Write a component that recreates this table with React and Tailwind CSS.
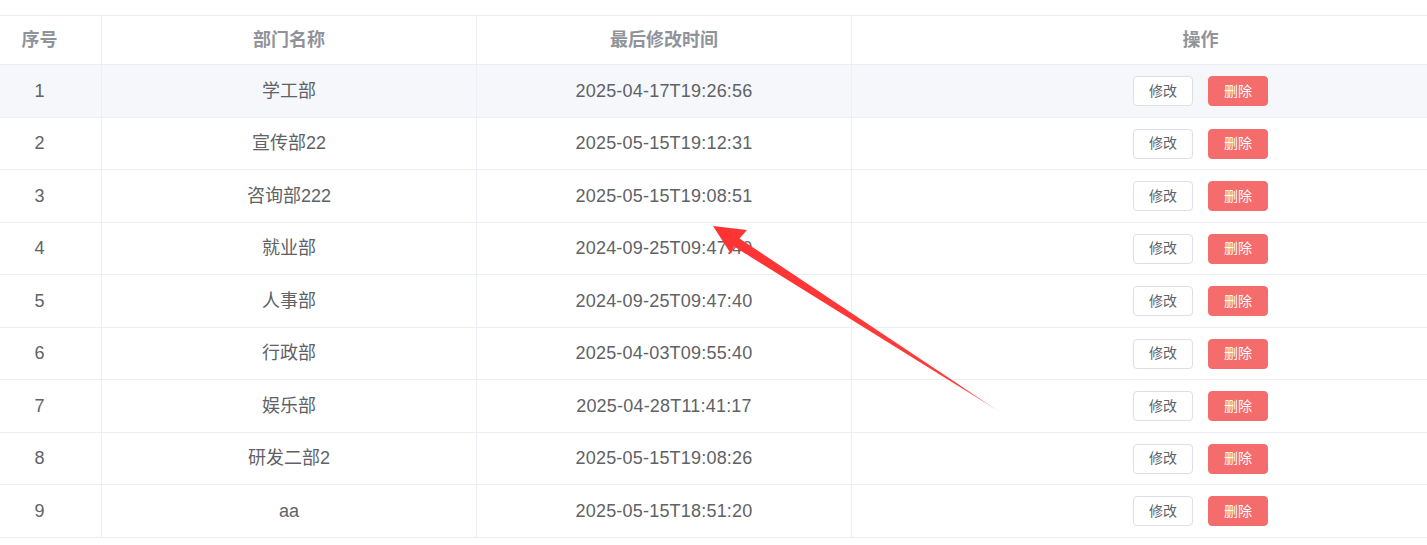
import React from "react";

const rows = [
  ["1", "学工部", "2025-04-17T19:26:56"],
  ["2", "宣传部22", "2025-05-15T19:12:31"],
  ["3", "咨询部222", "2025-05-15T19:08:51"],
  ["4", "就业部", "2024-09-25T09:47:40"],
  ["5", "人事部", "2024-09-25T09:47:40"],
  ["6", "行政部", "2025-04-03T09:55:40"],
  ["7", "娱乐部", "2025-04-28T11:41:17"],
  ["8", "研发二部2", "2025-05-15T19:08:26"],
  ["9", "aa", "2025-05-15T18:51:20"],
];

const font = {
  fontFamily:
    '"Liberation Sans", Arial, "Noto Sans CJK SC", sans-serif',
};

export default function App() {
  return (
    <div className="relative w-[1427px] h-[545px] overflow-hidden bg-white" style={font}>
      <div className="w-[1549px] mt-[15px] border-t border-[#ebeef5]">
        <div className="grid grid-cols-[102px_375px_375px_697px] h-[49px] border-b border-[#ebeef5] text-[18px] font-bold text-[#909399]">
          <div className="flex items-center justify-center pr-[22px] border-r border-[#ebeef5]">序号</div>
          <div className="flex items-center justify-center border-r border-[#ebeef5]">部门名称</div>
          <div className="flex items-center justify-center border-r border-[#ebeef5]">最后修改时间</div>
          <div className="flex items-center justify-center">操作</div>
        </div>
        {rows.map((r, i) => (
          <div
            key={i}
            className={`grid grid-cols-[102px_375px_375px_697px] border-b border-[#ebeef5] text-[18px] text-[#606266] ${
              i % 2 === 0 ? "h-[53px]" : "h-[52px]"
            } ${i === 0 ? "bg-[#f5f7fa]" : "bg-white"}`}
          >
            <div className="flex items-center justify-center pr-[22px] border-r border-[#ebeef5]">{r[0]}</div>
            <div className="flex items-center justify-center border-r border-[#ebeef5]">{r[1]}</div>
            <div className="flex items-center justify-center border-r border-[#ebeef5] tracking-[0.2px]">{r[2]}</div>
            <div className="flex items-center justify-center gap-[15px]">
              <button className="w-[60px] h-[30px] rounded-[4px] border border-[#dcdfe6] bg-white text-[14px] text-[#606266] flex items-center justify-center">
                修改
              </button>
              <button className="w-[60px] h-[30px] rounded-[4px] border border-[#f56c6c] bg-[#f56c6c] text-[14px] text-white flex items-center justify-center">
                删除
              </button>
            </div>
          </div>
        ))}
      </div>
      <svg className="absolute left-0 top-0 pointer-events-none" width="1427" height="545">
        <defs>
          <linearGradient id="ag" x1="713" y1="226" x2="1000" y2="412" gradientUnits="userSpaceOnUse">
            <stop offset="0" stopColor="#ff3333" />
            <stop offset="0.85" stopColor="#ff3b3b" />
            <stop offset="1" stopColor="#ffb0b0" />
          </linearGradient>
        </defs>
        <polygon
          points="713,226 747,230 739.5,238.5 1000,412 734,246.5 731,254"
          fill="url(#ag)"
        />
      </svg>
    </div>
  );
}
